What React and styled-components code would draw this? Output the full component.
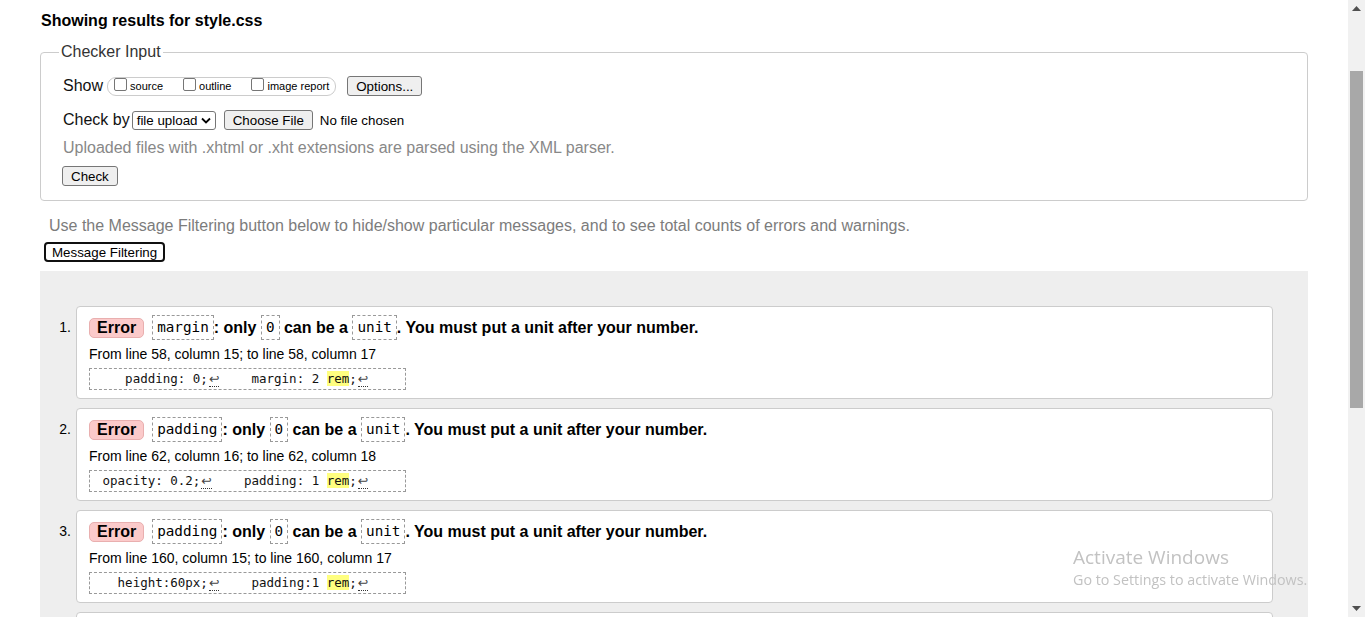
import React from 'react';
import styled, { createGlobalStyle } from 'styled-components';

const GlobalStyle = createGlobalStyle`
  html, body {
    margin: 0;
    padding: 0;
    overflow: hidden;
    background: #fff;
  }
  body {
    font-family: "Liberation Sans", Arial, sans-serif;
    color: #000;
  }
`;

const messages = [
  {
    prop: 'margin',
    location: 'From line 58, column 15; to line 58, column 17',
    before: '    padding: 0;',
    middle: '    margin: 2 ',
  },
  {
    prop: 'padding',
    location: 'From line 62, column 16; to line 62, column 18',
    before: ' opacity: 0.2;',
    middle: '    padding: 1 ',
  },
  {
    prop: 'padding',
    location: 'From line 160, column 15; to line 160, column 17',
    before: '   height:60px;',
    middle: '    padding:1 ',
  },
  {
    prop: 'padding',
    location: 'From line 171, column 14; to line 171, column 16',
    before: '   width:40px;',
    middle: '    padding:1 ',
  },
];

const App = () => {
  return (
    <>
      <GlobalStyle />
      <Shell>
        <Page>
          <Title>Showing results for style.css</Title>
          <Fieldset>
            <Legend>Checker Input</Legend>
            <Row $mt={15}>
              <RowLabel $mr={4}>Show</RowLabel>
              <CheckGroup>
                <Option>
                  <Box type="checkbox" />
                  <OptLabel>source</OptLabel>
                </Option>
                <Option $first={false}>
                  <Box type="checkbox" />
                  <OptLabel>outline</OptLabel>
                </Option>
                <Option $first={false}>
                  <Box type="checkbox" />
                  <OptLabel>image report</OptLabel>
                </Option>
              </CheckGroup>
              <Button $ml={11}>Options...</Button>
            </Row>
            <Row $mt={14}>
              <RowLabel $mr={2}>Check by</RowLabel>
              <Select>
                file upload
                <svg width="10" height="7" viewBox="0 0 10 7">
                  <path d="M1 1.5l4 4 4-4" fill="none" stroke="#000" strokeWidth="1.8" />
                </svg>
              </Select>
              <Button $ml={8}>Choose File</Button>
              <NoFile>No file chosen</NoFile>
            </Row>
            <Hint>Uploaded files with .xhtml or .xht extensions are parsed using the XML parser.</Hint>
            <Row $mt={9}>
              <Button $ml={-1}>Check</Button>
            </Row>
          </Fieldset>
          <Intro>
            Use the Message Filtering button below to hide/show particular messages, and to see total counts of errors and warnings.
          </Intro>
          <FilterButton>Message Filtering</FilterButton>
          <Results>
            {messages.map((m, i) => (
              <Item key={i}>
                <Marker>{i + 1}.</Marker>
                <Card>
                  <MsgLine>
                    <Badge>Error</Badge>
                    <Code>{m.prop}</Code>
                    <span>: only </span>
                    <Code>0</Code>
                    <span> can be a </span>
                    <Code>unit</Code>
                    <span>. You must put a unit after your number.</span>
                  </MsgLine>
                  <Location>{m.location}</Location>
                  <Extract>
                    {m.before}
                    <Ret>↩</Ret>
                    {m.middle}
                    <Hl>rem</Hl>;<Ret>↩</Ret>
                  </Extract>
                </Card>
              </Item>
            ))}
          </Results>
        </Page>
        <Scrollbar>
          <Arrow>
            <svg width="9" height="5" viewBox="0 0 9 5">
              <path d="M0 5L4.5 0 9 5z" fill="#505050" />
            </svg>
          </Arrow>
          <Track>
            <Thumb />
          </Track>
          <Arrow>
            <svg width="9" height="5" viewBox="0 0 9 5">
              <path d="M0 0L4.5 5 9 0z" fill="#505050" />
            </svg>
          </Arrow>
        </Scrollbar>
        <Watermark>
          <WmTitle>Activate Windows</WmTitle>
          <WmText>Go to Settings to activate Windows.</WmText>
        </Watermark>
      </Shell>
    </>
  );
};

const Shell = styled.div`
  display: flex;
  height: 617px;
  overflow: hidden;
`;

const Page = styled.div`
  flex: 1;
  min-width: 0;
  padding: 12px 40px 0;
  overflow: hidden;
`;

const Title = styled.h2`
  margin: 0;
  padding-left: 1px;
  font-size: 16px;
  line-height: 18px;
  font-weight: bold;
`;

const Fieldset = styled.fieldset`
  margin: 13px 0 0;
  padding: 0 22px 14px;
  border: 1px solid #ccc;
  border-radius: 4px;
  min-width: 0;
`;

const Legend = styled.legend`
  margin-left: -4px;
  padding: 0 2px;
  font-size: 16px;
  line-height: 18px;
  color: #333;
`;

const Row = styled.div`
  display: flex;
  align-items: center;
  height: 20px;
  margin-top: ${({ $mt }) => $mt || 0}px;
`;

const RowLabel = styled.span`
  font-size: 16px;
  margin-right: ${({ $mr }) => $mr}px;
  color: #111;
`;

const CheckGroup = styled.div`
  display: flex;
  align-items: center;
  height: 19px;
  box-sizing: border-box;
  padding: 0 6px;
  border: 1px solid #ccc;
  border-radius: 9px;
`;

const Option = styled.label`
  display: flex;
  align-items: center;
  margin-left: ${({ $first = true }) => ($first ? 0 : 20)}px;
`;

const Box = styled.input`
  appearance: none;
  width: 13px;
  height: 13px;
  margin: 0 3px 4px 0;
  box-sizing: border-box;
  border: 1px solid #767676;
  border-radius: 2px;
  background: #fff;
`;

const OptLabel = styled.span`
  font-size: 11px;
`;

const Button = styled.button`
  height: 20px;
  margin: 0 0 0 ${({ $ml }) => $ml || 0}px;
  padding: 0 8px;
  font-family: "Liberation Sans", Arial, sans-serif;
  font-size: 13.33px;
  color: #000;
  background: #efefef;
  border: 1px solid #767676;
  border-radius: 3px;
`;

const Select = styled.div`
  display: flex;
  align-items: center;
  justify-content: space-between;
  width: 84px;
  height: 19px;
  box-sizing: border-box;
  padding: 0 4px 0 4px;
  font-size: 13.33px;
  border: 1px solid #767676;
  border-radius: 3px;
  background: #fff;
`;

const NoFile = styled.span`
  margin-left: 7px;
  font-size: 13.33px;
`;

const Hint = styled.p`
  margin: 9px 0 0;
  font-size: 16px;
  line-height: 18px;
  color: #888;
`;

const Intro = styled.p`
  margin: 16px 0 0 9px;
  font-size: 16px;
  line-height: 18px;
  color: #7c7c7c;
`;

const FilterButton = styled.button`
  display: block;
  height: 20px;
  margin: 7px 0 0 4px;
  padding: 0 6px;
  font-family: "Liberation Sans", Arial, sans-serif;
  font-size: 13.33px;
  color: #000;
  background: #fff;
  border: 2px solid #101010;
  border-radius: 4px;
`;

const Results = styled.div`
  display: flex;
  flex-direction: column;
  gap: 9px;
  margin-top: 9px;
  padding: 35px 35px 40px 16px;
  background: #eee;
`;

const Item = styled.div`
  display: flex;
`;

const Marker = styled.div`
  flex-shrink: 0;
  width: 20px;
  box-sizing: border-box;
  padding: 9px 5px 0 0;
  text-align: right;
  font-size: 14px;
  line-height: 25px;
`;

const Card = styled.div`
  flex: 1;
  padding: 8px 12px;
  background: #fff;
  border: 1px solid #ccc;
  border-radius: 4px;
`;

const MsgLine = styled.div`
  display: flex;
  align-items: center;
  height: 25px;
  font-size: 16px;
  font-weight: bold;
  white-space: pre;
`;

const Badge = styled.span`
  height: 20px;
  box-sizing: border-box;
  margin-right: 8px;
  padding: 0 7px;
  line-height: 18px;
  background: #fbcaca;
  border: 1px solid #e9afaf;
  border-radius: 5px;
`;

const Code = styled.code`
  height: 25px;
  box-sizing: border-box;
  padding: 0 4px;
  line-height: 23px;
  font-family: "DejaVu Sans Mono", "Liberation Mono", monospace;
  font-size: 14.3px;
  font-weight: normal;
  border: 1px dashed #999;
  background: #fff;
`;

const Location = styled.p`
  margin: 6px 0 0;
  font-size: 14px;
  line-height: 16px;
`;

const Extract = styled.code`
  display: block;
  width: 317px;
  height: 22px;
  box-sizing: border-box;
  margin-top: 6px;
  padding-left: 5px;
  font-family: "DejaVu Sans Mono", "Liberation Mono", monospace;
  font-size: 12.5px;
  line-height: 20px;
  white-space: pre;
  color: #111;
  border: 1px dashed #999;
`;

const Hl = styled.span`
  background: #ffff80;
`;

const Ret = styled.span`
  margin: 0 2px 0 1px;
  font-family: "DejaVu Sans", sans-serif;
  font-size: 12.5px;
  color: #444;
  border-bottom: 1px dotted #333;
`;

const Scrollbar = styled.div`
  flex-shrink: 0;
  width: 17px;
  display: flex;
  flex-direction: column;
  background: #f1f1f1;
`;

const Arrow = styled.div`
  height: 17px;
  display: flex;
  align-items: center;
  justify-content: center;
`;

const Track = styled.div`
  flex: 1;
  padding: 54px 2px 0;
`;

const Thumb = styled.div`
  height: 337px;
  background: #a8a8a8;
`;

const Watermark = styled.div`
  position: fixed;
  left: 1073px;
  top: 544px;
  font-family: "Open Sans", "Noto Sans", sans-serif;
  color: #c2c2c2;
  pointer-events: none;
`;

const WmTitle = styled.div`
  font-size: 19px;
  line-height: 26px;
`;

const WmText = styled.div`
  font-size: 14.3px;
  line-height: 20px;
`;

export default App;
